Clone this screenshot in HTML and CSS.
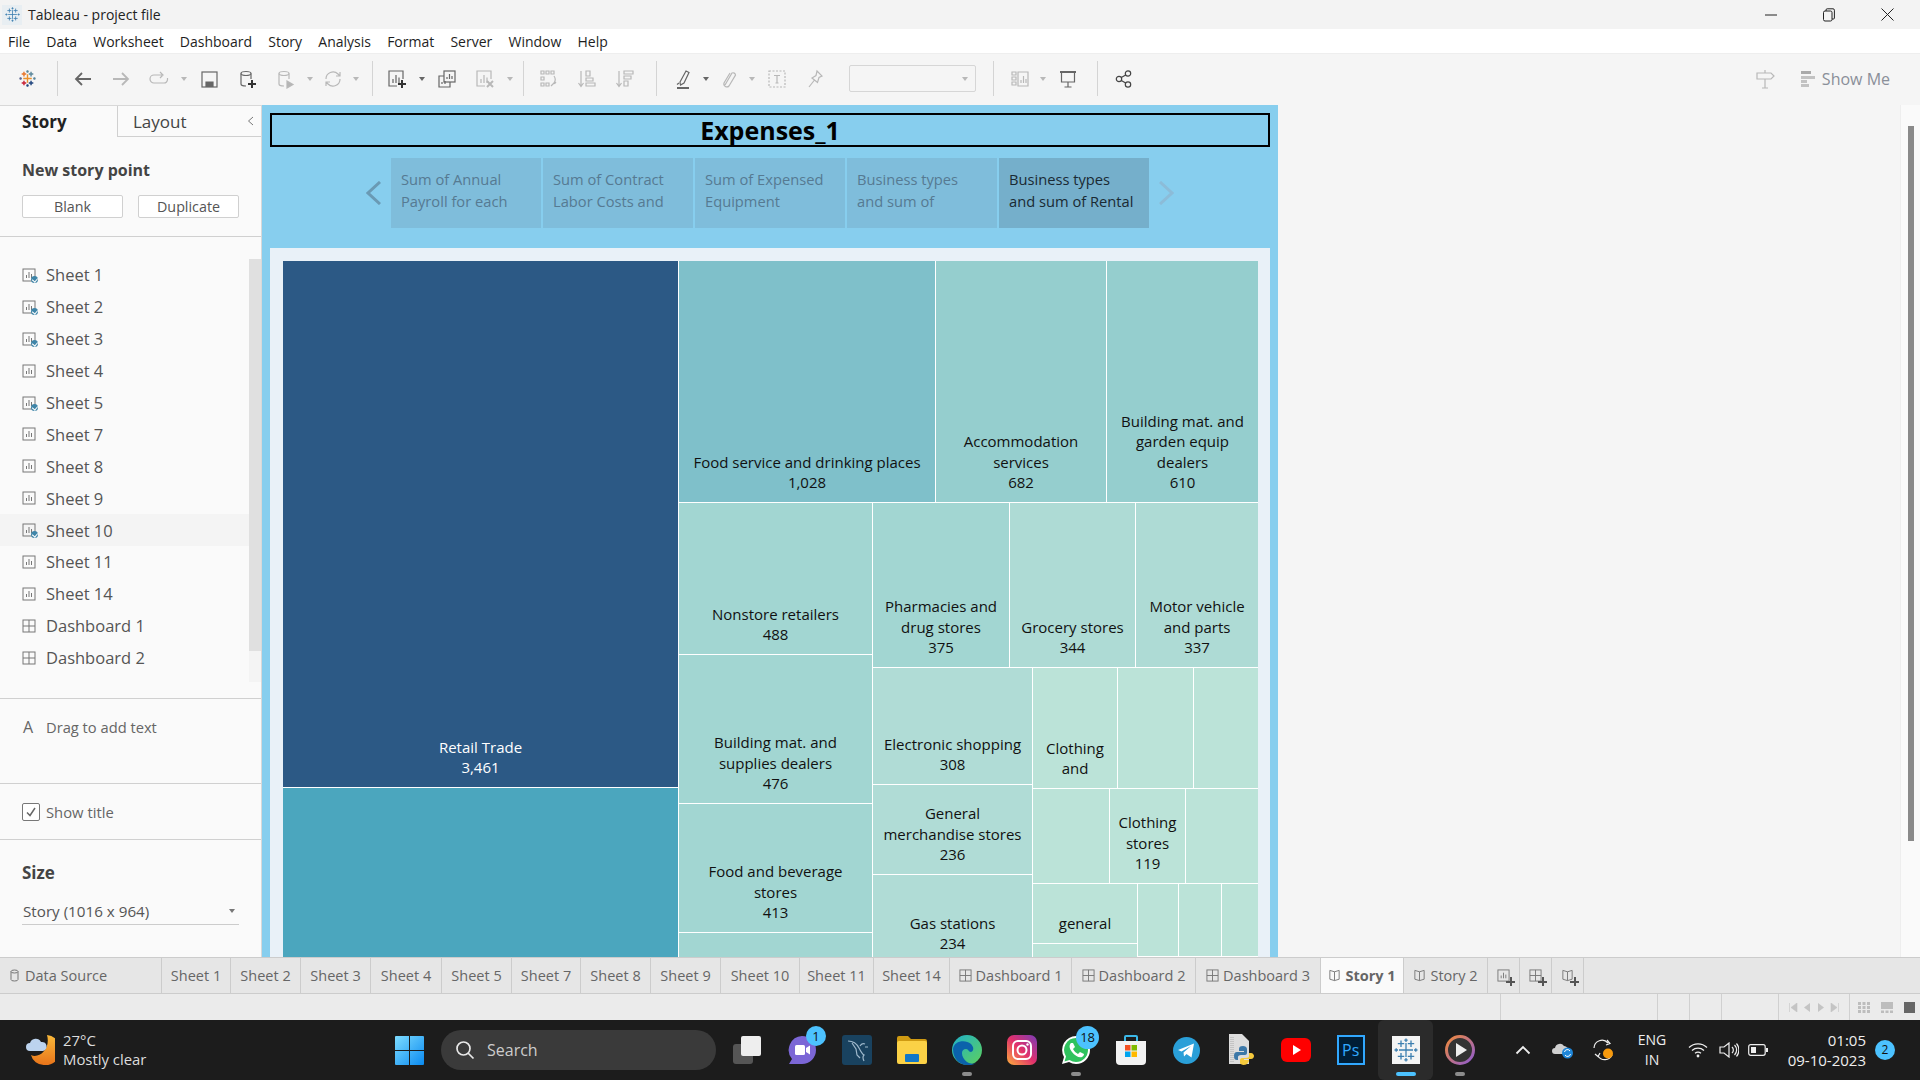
FILE: index.html
```html
<!DOCTYPE html>
<html lang="en">
<head>
    <meta charset="UTF-8">
    <title>Tableau - project file</title>
    <link rel="stylesheet" href="styles.css">
</head>
<body>
    <!-- shared icons -->
    <svg class="defs" aria-hidden="true">
        <symbol id="sheet" viewBox="0 0 14 14">
            <rect x="1" y="1" width="12" height="12" fill="none" stroke="#777" stroke-width="1"/>
            <path d="M4.5 10V7M7 10V4M9.5 10V6" fill="none" stroke="#777" stroke-width="1"/>
        </symbol>
        <symbol id="dash" viewBox="0 0 14 14">
            <rect x="1" y="1" width="12" height="12" fill="none" stroke="#777" stroke-width="1"/>
            <path d="M7 1V13M1 7H13" fill="none" stroke="#777" stroke-width="1"/>
        </symbol>
        <symbol id="book" viewBox="0 0 14 14">
            <path d="M7 3L2 1.5V11L7 12.5L12 11V1.5L7 3V12.5" fill="none" stroke="#777" stroke-width="1"/>
        </symbol>
        <symbol id="snow" viewBox="0 0 24 24">
            <path d="M12 5V19M5 12H19M7 2.5V9M3.8 5.7H10.2M17 2.5V9M13.8 5.7H20.2M7 15V21.5M3.8 18.3H10.2M17 15V21.5M13.8 18.3H20.2M12 .5V4M10.3 2.2H13.7M12 20V23.5M10.3 21.8H13.7M.5 12H4M2.2 10.3V13.7M20 12H23.5M21.8 10.3V13.7" fill="none" stroke="#3d7fb0" stroke-width="1.3"/>
        </symbol>
    </svg>

    <div class="app">
        <header class="titlebar">
            <div class="app-title">
                <span class="app-icon"><svg width="15" height="15"><use href="#snow"/></svg></span>
                <span>Tableau - project file</span>
            </div>
            <div class="win-controls">
                <svg width="12" height="12" viewBox="0 0 12 12"><path d="M0 6H12" stroke="#222" stroke-width="1"/></svg>
                <svg width="12" height="14" viewBox="0 0 12 14"><rect x=".5" y="3" width="8.5" height="10" rx="1.5" fill="none" stroke="#222"/><path d="M3 3V2a1.2 1.2 0 0 1 1.2-1.2H10a1.4 1.4 0 0 1 1.4 1.4V10a1 1 0 0 1-1 1H9" fill="none" stroke="#222"/></svg>
                <svg width="13" height="13" viewBox="0 0 13 13"><path d="M.5 .5L12.5 12.5M12.5 .5L.5 12.5" stroke="#222" stroke-width="1"/></svg>
            </div>
        </header>

        <nav class="menubar">
            <span>File</span><span>Data</span><span>Worksheet</span><span>Dashboard</span><span>Story</span><span>Analysis</span><span>Format</span><span>Server</span><span>Window</span><span>Help</span>
        </nav>

        <div class="toolbar">
            <div class="tool-group g-logo">
                <svg width="17" height="17" viewBox="0 0 24 24" fill="none" stroke-width="2">
                    <path d="M7 2.5V9M3.8 5.7H10.2" stroke="#e8762b"/><path d="M17 2.5V9M13.8 5.7H20.2" stroke="#5b879b"/>
                    <path d="M7 15V21.5M3.8 18.3H10.2" stroke="#c72035"/><path d="M17 15V21.5M13.8 18.3H20.2" stroke="#1f447e"/>
                    <path d="M12 6V18M6 12H18" stroke="#eb912b"/><path d="M12 .5V4M10.3 2.2H13.7" stroke="#59879b"/>
                    <path d="M.5 12H4M2.2 10.3V13.7" stroke="#5b6591"/><path d="M20 12H23.5M21.8 10.3V13.7" stroke="#5b879b"/>
                    <path d="M12 20V23.5M10.3 21.8H13.7" stroke="#1f447e"/>
                </svg>
            </div>
            <i class="sep"></i>
            <div class="tool-group g-nav">
                <span class="tool"><svg class="ico on" viewBox="0 0 20 20"><path d="M18 10H3M9 4L3 10L9 16" stroke-width="1.8"/></svg></span>
                <span class="tool"><svg class="ico off" viewBox="0 0 20 20"><path d="M2 10H17M11 4L17 10L11 16" stroke-width="1.8"/></svg></span>
                <span class="tool"><svg class="ico off" viewBox="0 0 20 20"><path d="M13 6H5a3.5 3.5 0 0 0 0 8h10a3.5 3.5 0 0 0 3.5-3.5V9M11 3l3 3-3 3"/></svg></span>
                <span class="caret off"></span>
                <span class="tool"><svg class="ico on" viewBox="0 0 20 20"><rect x="3" y="3" width="15" height="15"/><path d="M7 18V13H14V18" fill="#666"/></svg></span>
                <span class="tool"><svg class="ico on" viewBox="0 0 20 20"><ellipse cx="9" cy="4.5" rx="5" ry="2"/><path d="M4 4.5V15a5 2 0 0 0 5 2M14 4.5V10"/><path d="M15 11V19M11 15H19" stroke="#333" stroke-width="2"/></svg></span>
                <span class="tool"><svg class="ico off" viewBox="0 0 20 20"><ellipse cx="9" cy="4.5" rx="5" ry="2"/><path d="M4 4.5V15a5 2 0 0 0 5 2M14 4.5V10"/><path d="M12 12L18 15.5L12 19Z" fill="#b5b5b5"/></svg></span>
                <span class="caret off"></span>
                <span class="tool tool-n"><svg class="ico off" viewBox="0 0 20 20"><path d="M3 10a7 7 0 0 1 12-5l2 2M17 10a7 7 0 0 1-12 5l-2-2M17 3V7H13M3 17V13H7"/></svg></span>
                <span class="caret off"></span>
            </div>
            <i class="sep"></i>
            <div class="tool-group g-sheet">
                <span class="tool"><svg class="ico on" viewBox="0 0 20 20"><path d="M10 17H2V2H16V10"/><path d="M6 14V10M9 14V6M12 14V8.5"/><path d="M15 11V19M11 15H19" stroke="#333" stroke-width="2"/></svg></span>
                <span class="caret on"></span>
                <span class="tool"><svg class="ico on" viewBox="0 0 20 20"><rect x="7" y="2" width="11" height="11" fill="#f5f5f5"/><path d="M10 10V8M12.5 10V5M15 10V7"/><path d="M7 7H2V18H13V13"/><path d="M5 15V13M8 15V12"/></svg></span>
                <span class="tool"><svg class="ico off" viewBox="0 0 20 20"><path d="M10 17H2V2H16V10"/><path d="M6 14V10M9 14V6M12 14V8.5"/><path d="M12 12L18 18M18 12L12 18" stroke-width="2"/></svg></span>
                <span class="caret off"></span>
            </div>
            <i class="sep"></i>
            <div class="tool-group g-sort">
                <span class="tool"><svg class="ico off" viewBox="0 0 20 20"><path d="M2 2h3v3H2zM7 2h3v3H7zM12 2h3v3h-3zM2 8h3v3H2zM2 14h3v3H2zM7 14h3v3H7z"/><path d="M15 7a6 6 0 0 1 0 7l-3 3M17 13l-1.500 2"/></svg></span>
                <span class="tool"><svg class="ico off" viewBox="0 0 20 20"><path d="M4 2V17M1.500 14L4 17.500L6.500 14"/><path d="M9 2h4v5H9zM9 9h7v3H9zM9 14h9v3H9z"/></svg></span>
                <span class="tool"><svg class="ico off" viewBox="0 0 20 20"><path d="M4 2V17M1.500 14L4 17.500L6.500 14"/><path d="M9 2h9v3H9zM9 7h7v3H9zM9 12h4v5H9z"/></svg></span>
            </div>
            <i class="sep"></i>
            <div class="tool-group g-annot">
                <span class="tool tool-n"><svg class="ico on" viewBox="0 0 20 20"><path d="M7 13L13 2L16 3.500L11 14L7.500 16ZM4 15.500L6 14"/><path d="M4 19H16" stroke-width="2"/></svg></span>
                <span class="caret on"></span>
                <span class="tool tool-n"><svg class="ico off" viewBox="0 0 20 20"><path d="M6 16L13 4a2.500 2.500 0 0 1 3.500 2L10 17a3 3 0 0 1-5-3L11 4"/></svg></span>
                <span class="caret off"></span>
                <span class="tool"><svg class="ico off" viewBox="0 0 20 20"><rect x="2" y="2" width="16" height="16" stroke-dasharray="2 1.500"/><path d="M7 6.500H13M10 6.500V14M8.500 14H11.500"/></svg></span>
                <span class="tool"><svg class="ico off" viewBox="0 0 20 20"><path d="M12 2L17 7L14 8.500L12.500 13.500L7 9L11 6.500ZM9.500 11L4 18"/></svg></span>
                <div class="fit-select"><span class="caret off"></span></div>
            </div>
            <i class="sep"></i>
            <div class="tool-group g-view">
                <span class="tool tool-n"><svg class="ico off" viewBox="0 0 20 20"><path d="M2 3h4v3H2zM2 8h4v3H2zM2 13h4v3H2zM8 3H18V17H8zM11 14V11M13.500 14V7M16 14V10"/></svg></span>
                <span class="caret off"></span>
                <span class="tool"><svg class="ico on" viewBox="0 0 20 20"><path d="M2 3H18" stroke-width="2"/><path d="M3.500 3V13H16.500V3M10 13V18M6.500 18H13.500"/></svg></span>
            </div>
            <i class="sep"></i>
            <div class="tool-group g-share">
                <span class="tool"><svg class="ico dark" viewBox="0 0 20 20"><circle cx="5" cy="10" r="2.700"/><circle cx="14" cy="4.500" r="2.700"/><circle cx="14" cy="15.500" r="2.700"/><path d="M7.300 8.600L11.700 6M7.300 11.400L11.700 14"/></svg></span>
            </div>
            <div class="toolbar-right">
                <svg class="ico off sign" viewBox="0 0 20 20"><path d="M2 4H16L19 7L16 10H2ZM10 1V4M10 10V19M7 19H13"/></svg>
                <div class="show-me">
                    <svg width="14" height="18" viewBox="0 0 14 18"><path d="M0 1h10v3H0z" fill="#aaa"/><path d="M0 6h14v3H0z" fill="#c2c2c2"/><path d="M0 10h6v3H0z" fill="#c2c2c2"/><path d="M0 14h8v3H0z" fill="#c2c2c2"/></svg>
                    <span>Show Me</span>
                </div>
            </div>
        </div>

        <div class="workspace">
            <aside class="side">
                <div class="side-tabs">
                    <div class="side-tab active">Story</div>
                    <div class="side-tab">Layout<svg class="collapse" width="7" height="10" viewBox="0 0 7 10"><path d="M6 1L1.500 5L6 9" fill="none" stroke="#777"/></svg></div>
                </div>
                <section class="new-point">
                    <h3>New story point</h3>
                    <div class="point-btns">
                        <button type="button">Blank</button>
                        <button type="button">Duplicate</button>
                    </div>
                </section>
                <section class="sheet-section">
                    <ul class="sheet-list">
                        <li><span class="sheet-ico"><svg width="14" height="14"><use href="#sheet"/></svg><b class="done"></b></span>Sheet 1</li>
                        <li><span class="sheet-ico"><svg width="14" height="14"><use href="#sheet"/></svg><b class="done"></b></span>Sheet 2</li>
                        <li><span class="sheet-ico"><svg width="14" height="14"><use href="#sheet"/></svg><b class="done"></b></span>Sheet 3</li>
                        <li><span class="sheet-ico"><svg width="14" height="14"><use href="#sheet"/></svg></span>Sheet 4</li>
                        <li><span class="sheet-ico"><svg width="14" height="14"><use href="#sheet"/></svg><b class="done"></b></span>Sheet 5</li>
                        <li><span class="sheet-ico"><svg width="14" height="14"><use href="#sheet"/></svg></span>Sheet 7</li>
                        <li><span class="sheet-ico"><svg width="14" height="14"><use href="#sheet"/></svg></span>Sheet 8</li>
                        <li><span class="sheet-ico"><svg width="14" height="14"><use href="#sheet"/></svg></span>Sheet 9</li>
                        <li class="hover"><span class="sheet-ico"><svg width="14" height="14"><use href="#sheet"/></svg><b class="done"></b></span>Sheet 10</li>
                        <li><span class="sheet-ico"><svg width="14" height="14"><use href="#sheet"/></svg></span>Sheet 11</li>
                        <li><span class="sheet-ico"><svg width="14" height="14"><use href="#sheet"/></svg></span>Sheet 14</li>
                        <li><span class="sheet-ico"><svg width="14" height="14"><use href="#dash"/></svg></span>Dashboard 1</li>
                        <li><span class="sheet-ico"><svg width="14" height="14"><use href="#dash"/></svg></span>Dashboard 2</li>
                    </ul>
                    <div class="side-scroll"><div class="side-thumb"></div></div>
                </section>
                <section class="drag-text"><span class="big-a">A</span>Drag to add text</section>
                <section class="show-title">
                    <span class="checkbox"><svg width="12" height="12" viewBox="0 0 12 12"><path d="M2 6.500L5 9.500L10 2" fill="none" stroke="#666" stroke-width="1.500"/></svg></span>
                    Show title
                </section>
                <section class="size-section">
                    <h3>Size</h3>
                    <div class="size-select">Story (1016 x 964)<span class="caret on"></span></div>
                </section>
            </aside>

            <main class="story">
                <div class="story-title">Expenses_1</div>
                <div class="points">
                    <svg class="chev" width="15" height="24" viewBox="0 0 15 24"><path d="M14 1L2 12L14 23" fill="none" stroke="#6a9ab4" stroke-width="3"/></svg>
                    <div class="point">Sum of Annual<br>Payroll for each</div>
                    <div class="point">Sum of Contract<br>Labor Costs and</div>
                    <div class="point">Sum of Expensed<br>Equipment</div>
                    <div class="point">Business types<br>and sum of</div>
                    <div class="point current">Business types<br>and sum of Rental</div>
                    <svg class="chev next" width="15" height="24" viewBox="0 0 15 24"><path d="M1 1L13 12L1 23" fill="none" stroke="#8cbcd8" stroke-width="3"/></svg>
                </div>
                <div class="frame">
                    <div class="treemap">
                        <div class="tm-col c-retail">
                            <div class="tile retail">Retail Trade<br>3,461</div>
                            <div class="tile other"></div>
                        </div>
                        <div class="tm-col c-rest">
                            <div class="tm-row r-top">
                                <div class="tile food">Food service and drinking places<br>1,028</div>
                                <div class="tile accom">Accommodation<br>services<br>682</div>
                                <div class="tile build">Building mat. and<br>garden equip<br>dealers<br>610</div>
                            </div>
                            <div class="tm-row r-low">
                                <div class="tm-col c-left">
                                    <div class="tile nonstore">Nonstore retailers<br>488</div>
                                    <div class="tile supplies">Building mat. and<br>supplies dealers<br>476</div>
                                    <div class="tile bev">Food and beverage<br>stores<br>413</div>
                                    <div class="tile bev-next"></div>
                                </div>
                                <div class="tm-col c-mid">
                                    <div class="tm-row r-mid">
                                        <div class="tile pharm">Pharmacies and<br>drug stores<br>375</div>
                                        <div class="tile grocery">Grocery stores<br>344</div>
                                        <div class="tile motor">Motor vehicle<br>and parts<br>337</div>
                                    </div>
                                    <div class="tm-row r-rest">
                                        <div class="tm-col c-elec">
                                            <div class="tile elec">Electronic shopping<br>308</div>
                                            <div class="tile general">General<br>merchandise stores<br>236</div>
                                            <div class="tile gas">Gas stations<br>234</div>
                                        </div>
                                        <div class="tm-col c-small">
                                            <div class="tm-row s1">
                                                <div class="tile s1a">Clothing<br>and</div>
                                                <div class="tile s1b"></div>
                                                <div class="tile s1c"></div>
                                            </div>
                                            <div class="tm-row s2">
                                                <div class="tile s2a"></div>
                                                <div class="tile s2b">Clothing<br>stores<br>119</div>
                                                <div class="tile s2c"></div>
                                            </div>
                                            <div class="tm-row s3">
                                                <div class="tm-col s3a">
                                                    <div class="tile s3a1">general</div>
                                                    <div class="tile s3a2"></div>
                                                </div>
                                                <div class="tile s3b"></div>
                                                <div class="tile s3c"></div>
                                                <div class="tile s3d"></div>
                                            </div>
                                        </div>
                                    </div>
                                </div>
                            </div>
                        </div>
                    </div>
                </div>
            </main>

            <div class="canvas-rest"></div>
            <div class="main-scroll"><div class="main-thumb"></div></div>
        </div>

        <div class="tabs">
            <div class="tab t162 t-source"><svg width="9" height="13" viewBox="0 0 9 13"><ellipse cx="4.500" cy="2.500" rx="3.500" ry="1.500" fill="none" stroke="#777"/><path d="M1 2.500V10.500a3.500 1.500 0 0 0 7 0V2.500" fill="none" stroke="#777"/></svg>Data Source</div>
            <div class="tab t69">Sheet 1</div>
            <div class="tab t70">Sheet 2</div>
            <div class="tab t70">Sheet 3</div>
            <div class="tab t71">Sheet 4</div>
            <div class="tab t70">Sheet 5</div>
            <div class="tab t69">Sheet 7</div>
            <div class="tab t70">Sheet 8</div>
            <div class="tab t70">Sheet 9</div>
            <div class="tab t79">Sheet 10</div>
            <div class="tab t74">Sheet 11</div>
            <div class="tab t76">Sheet 14</div>
            <div class="tab t122"><svg width="13" height="13"><use href="#dash"/></svg>Dashboard 1</div>
            <div class="tab t124"><svg width="13" height="13"><use href="#dash"/></svg>Dashboard 2</div>
            <div class="tab t125"><svg width="13" height="13"><use href="#dash"/></svg>Dashboard 3</div>
            <div class="tab t83 active"><svg width="13" height="13"><use href="#book"/></svg>Story 1</div>
            <div class="tab t84"><svg width="13" height="13"><use href="#book"/></svg>Story 2</div>
            <div class="tab t32"><span class="add-ico"><svg width="13" height="13"><use href="#sheet"/></svg><i></i></span></div>
            <div class="tab t32"><span class="add-ico"><svg width="13" height="13"><use href="#dash"/></svg><i></i></span></div>
            <div class="tab t32"><span class="add-ico"><svg width="13" height="13"><use href="#book"/></svg><i></i></span></div>
        </div>

        <div class="statusbar">
            <div class="st st-main"></div>
            <div class="st st-a"></div>
            <div class="st st-b"></div>
            <div class="st st-b"></div>
            <div class="st st-c"></div>
            <div class="st st-nav">
                <svg width="9" height="9" viewBox="0 0 9 9"><path d="M.5 0V9M8 0V9L2 4.500Z" fill="#c4c4c4" stroke="#c4c4c4" stroke-width=".6"/></svg>
                <svg width="7" height="9" viewBox="0 0 7 9"><path d="M6 0V9L0 4.500Z" fill="#c4c4c4"/></svg>
                <svg width="7" height="9" viewBox="0 0 7 9"><path d="M1 0V9L7 4.500Z" fill="#c4c4c4"/></svg>
                <svg width="9" height="9" viewBox="0 0 9 9"><path d="M8.500 0V9M1 0V9L7 4.500Z" fill="#c4c4c4" stroke="#c4c4c4" stroke-width=".6"/></svg>
            </div>
            <div class="st st-views">
                <svg width="12" height="11" viewBox="0 0 12 11" fill="#bdbdbd"><path d="M0 0h3v3H0zM4.500 0h3v3h-3zM9 0h3v3H9zM0 4h3v3H0zM4.500 4h3v3h-3zM9 4h3v3H9zM0 8h3v3H0zM4.500 8h3v3h-3zM9 8h3v3H9z"/></svg>
                <svg width="12" height="11" viewBox="0 0 12 11" fill="#bdbdbd"><path d="M0 0h12v7H0zM0 8.500h3V11H0zM4.500 8.500h3V11h-3zM9 8.500h3V11H9z"/></svg>
                <svg width="11" height="11" viewBox="0 0 11 11" fill="#666"><path d="M0 0h11v11H0z"/></svg>
            </div>
        </div>

        <footer class="taskbar">
            <div class="weather">
                <svg width="30" height="34" viewBox="0 0 30 34">
                    <defs><linearGradient id="moon" x1="0" y1="0" x2="0" y2="1"><stop offset="0" stop-color="#f9b93a"/><stop offset="1" stop-color="#e8741a"/></linearGradient></defs>
                    <path d="M22 2a14 14 0 0 1-3 30 13 13 0 0 1-13-10c8 4 20-6 16-20Z" fill="url(#moon)"/>
                    <path d="M5 18a4 4 0 0 1 0-8 6 6 0 0 1 11-1 4.500 4.500 0 0 1 2 9Z" fill="#bcd3ee"/>
                </svg>
                <div class="weather-text"><span>27°C</span><span>Mostly clear</span></div>
            </div>
            <svg class="start" width="29" height="29" viewBox="0 0 29 29">
                <defs><linearGradient id="win" x1="0" y1="0" x2="1" y2="1"><stop offset="0" stop-color="#7ddcff"/><stop offset="1" stop-color="#0a8af0"/></linearGradient></defs>
                <path d="M0 1a1 1 0 0 1 1-1H14V14H0ZM15 0H28a1 1 0 0 1 1 1V14H15ZM0 15H14V29H1a1 1 0 0 1-1-1ZM15 15H29V28a1 1 0 0 1-1 1H15Z" fill="url(#win)"/>
            </svg>
            <div class="search">
                <svg width="20" height="20" viewBox="0 0 20 20"><circle cx="8.500" cy="8.500" r="6.500" fill="none" stroke="#e8e8e8" stroke-width="1.700"/><path d="M13 13L18.500 18.500" stroke="#e8e8e8" stroke-width="1.700"/></svg>
                <span>Search</span>
            </div>
            <div class="task-items">
                <div class="task-item">
                    <svg width="30" height="30" viewBox="0 0 30 30"><rect x="1" y="9" width="20" height="20" rx="3" fill="#555"/><rect x="9" y="1" width="20" height="20" rx="2" fill="#eee"/></svg>
                </div>
                <div class="task-item">
                    <svg width="30" height="32" viewBox="0 0 30 32"><path d="M15 2a14 14 0 0 1 14 14 14 14 0 0 1-14 14H2l3-5A14 14 0 0 1 15 2Z" fill="#7b66d6"/><rect x="8" y="11" width="10" height="10" rx="1.500" fill="#fff"/><path d="M19 14L23 11.500V20.500L19 18Z" fill="#fff"/></svg>
                    <span class="badge">1</span>
                </div>
                <div class="task-item">
                    <svg width="30" height="30" viewBox="0 0 30 30"><rect width="30" height="30" rx="3" fill="#19425f"/><path d="M6 6c6 0 9 3 11 7s3 6 5 7c-2 2-1 4 0 6M10 8l4 6 1 6 3 3M18 11c1-2 3-3 5-2M23 12h3" fill="none" stroke="#9fb9cc" stroke-width="1.200"/></svg>
                </div>
                <div class="task-item">
                    <svg width="30" height="28" viewBox="0 0 30 28"><path d="M0 2a2 2 0 0 1 2-2H11l3 3H28a2 2 0 0 1 2 2V8H0Z" fill="#cf9a12"/><rect y="5" width="30" height="23" rx="2" fill="#fbd146"/><rect x="8" y="18" width="14" height="8" rx="1" fill="#1177c9"/></svg>
                </div>
                <div class="task-item running">
                    <svg width="30" height="30" viewBox="0 0 30 30">
                        <defs><linearGradient id="edge" x1="0" y1="0" x2="1" y2="1"><stop offset="0" stop-color="#1fb0c9"/><stop offset="1" stop-color="#5ed15c"/></linearGradient></defs>
                        <circle cx="15" cy="15" r="15" fill="url(#edge)"/>
                        <path d="M1 14C2 6 13 4 19 9c3 3 3 7 0 8-3 0-2-3-5-3-6 0-5 9 1 13 3 2 7 2 9 1-7 5-23 2-23-14Z" fill="#0b62ab"/>
                    </svg>
                </div>
                <div class="task-item">
                    <svg width="30" height="30" viewBox="0 0 30 30">
                        <defs><linearGradient id="insta" x1="0" y1="1" x2="1" y2="0"><stop offset="0" stop-color="#fdb03c"/><stop offset=".5" stop-color="#e1306c"/><stop offset="1" stop-color="#7a3db8"/></linearGradient></defs>
                        <rect width="30" height="30" rx="7" fill="url(#insta)"/>
                        <rect x="6" y="6" width="18" height="18" rx="5" fill="none" stroke="#fff" stroke-width="2"/>
                        <circle cx="15" cy="15" r="4.500" fill="none" stroke="#fff" stroke-width="2"/>
                        <circle cx="20.500" cy="9.500" r="1.200" fill="#fff"/>
                    </svg>
                </div>
                <div class="task-item running">
                    <svg width="30" height="30" viewBox="0 0 30 30"><path d="M15 1a14 14 0 0 1 0 28 14 14 0 0 1-7-2L1 29l2-7A14 14 0 0 1 15 1Z" fill="#fff"/><path d="M15 3a12 12 0 0 1 0 24 12 12 0 0 1-6.500-2L3.500 26.500 5 21.500A12 12 0 0 1 15 3Z" fill="#2fc25d"/><path d="M10 8c-2 2-2 5 1 9s7 6 10 5c2-1 2-3 2-3l-4-2-2 2c-2-1-4-3-5-5l2-2-2-4Z" fill="#fff"/></svg>
                    <span class="badge wide">18</span>
                </div>
                <div class="task-item">
                    <svg width="30" height="30" viewBox="0 0 30 30"><path d="M9 7V2a1 1 0 0 1 1-1H20a1 1 0 0 1 1 1V7" fill="none" stroke="#3bb8e8" stroke-width="2"/><path d="M0 6H30V26a4 4 0 0 1-4 4H4a4 4 0 0 1-4-4Z" fill="#f2f2f2"/><rect x="9" y="10" width="5.500" height="5.500" fill="#f25022"/><rect x="15.500" y="10" width="5.500" height="5.500" fill="#7fba00"/><rect x="9" y="16.500" width="5.500" height="5.500" fill="#00a4ef"/><rect x="15.500" y="16.500" width="5.500" height="5.500" fill="#ffb900"/></svg>
                </div>
                <div class="task-item">
                    <svg width="27" height="27" viewBox="0 0 27 27"><circle cx="13.500" cy="13.500" r="13.500" fill="#2a9fd8"/><path d="M5 13L21 6.500L18.500 20.500L13.500 17L11 19.500L10.500 15.500L18 9L8.500 14.500Z" fill="#fff"/></svg>
                </div>
                <div class="task-item">
                    <svg width="26" height="32" viewBox="0 0 26 32"><path d="M1 0H14L21 7V30H1Z" fill="#ddd"/><path d="M3 3V28M5 3V28" stroke="#aaa" stroke-dasharray="1 1"/><path d="M15 12c-3 0-4 1-4 3v2h5v1H9c-2 0-3 1-3 4s1 4 3 4h1v-3c0-1 1-2 3-2h4c1 0 2-1 2-2v-4c0-2-2-3-4-3Z" fill="#3c78a8"/><path d="M21 19v3c0 1-1 2-3 2h-4c-1 0-2 1-2 2v3c0 2 6 3 8 0 1-1 1-3 1-3h-5v-1h7c2 0 3-2 3-3s-1-3-3-3Z" fill="#f5c93c"/></svg>
                </div>
                <div class="task-item">
                    <svg width="30" height="24" viewBox="0 0 30 24"><rect width="30" height="24" rx="6" fill="#f00"/><path d="M12 7L20 12L12 17Z" fill="#fff"/></svg>
                </div>
                <div class="task-item"><span class="ps">Ps</span></div>
                <div class="task-item current">
                    <span class="tableau-tile"><svg width="24" height="24"><use href="#snow"/></svg></span>
                </div>
                <div class="task-item running">
                    <svg width="30" height="30" viewBox="0 0 30 30">
                        <defs><linearGradient id="ring" x1="0" y1="0" x2="1" y2="1"><stop offset="0" stop-color="#f18a3b"/><stop offset="1" stop-color="#8d5bd1"/></linearGradient></defs>
                        <circle cx="15" cy="15" r="13.500" fill="#333" stroke="url(#ring)" stroke-width="3"/>
                        <path d="M11 8L22 15L11 22Z" fill="#eee"/>
                    </svg>
                </div>
            </div>
            <div class="tray">
                <span class="tray-item w40"><svg width="16" height="10" viewBox="0 0 16 10"><path d="M1.500 8.500L8 2L14.500 8.500" fill="none" stroke="#eee" stroke-width="1.800"/></svg></span>
                <span class="tray-item w39"><svg width="22" height="18" viewBox="0 0 22 18"><path d="M3 13a3 3 0 0 1 0-6 5 5 0 0 1 9-2 4 4 0 0 1 4 5v3Z" fill="#cfcfcf"/><circle cx="15.500" cy="12" r="5.500" fill="#1f86d8"/><path d="M12.500 11a3 3 0 0 1 5.500-1M18.500 13a3 3 0 0 1-5.500 1" fill="none" stroke="#fff"/></svg></span>
                <span class="tray-item w42"><svg width="22" height="22" viewBox="0 0 22 22"><path d="M2 9a8 8 0 0 1 14-5M15 1L18 4.500L14 6M20 16a8 8 0 0 1-14 1M3 15l3 2.500L8 14" fill="none" stroke="#eee" stroke-width="1.200"/><circle cx="16" cy="14.500" r="5" fill="#f79a0e"/></svg></span>
                <span class="tray-item w56 lang">ENG<br>IN</span>
                <span class="tray-item w36"><svg width="20" height="16" viewBox="0 0 20 16"><path d="M1 5.500a13 13 0 0 1 18 0M4 8.500a9 9 0 0 1 12 0M7 11.200a5 5 0 0 1 6 0" fill="none" stroke="#eee" stroke-width="1.300"/><circle cx="10" cy="14" r="1.400" fill="#eee"/></svg></span>
                <span class="tray-item w25"><svg width="20" height="16" viewBox="0 0 20 16"><path d="M1 5H5L10 1V15L5 11H1Z" fill="none" stroke="#eee" stroke-width="1.200"/><path d="M13 5a4 4 0 0 1 0 6M15.500 3a7 7 0 0 1 0 10M17.500 1.500a10 10 0 0 1 0 13" fill="none" stroke="#eee" stroke-width="1.200"/></svg></span>
                <span class="tray-item w34"><svg width="20" height="12" viewBox="0 0 20 12"><rect x=".7" y=".7" width="16.500" height="10.600" rx="2" fill="none" stroke="#eee" stroke-width="1.200"/><rect x="3" y="3" width="5" height="6" fill="#eee"/><rect x="18" y="4" width="2" height="4" fill="#eee"/></svg></span>
                <span class="clock">01:05<br>09-10-2023</span>
                <span class="notif">2</span>
            </div>
        </footer>
    </div>
</body>
</html>
```

FILE: styles.css
```css
* {
    box-sizing: border-box;
}

html, body {
    margin: 0;
    height: 100%;
    overflow: hidden;
}

body {
    font-family: "Open Sans", Arial, sans-serif;
    font-size: 14px;
    color: #333;
    background: #f5f5f5;
}

.defs {
    position: absolute;
    width: 0;
    height: 0;
}

.app {
    display: flex;
    flex-direction: column;
    width: 1920px;
    height: 1080px;
}

/* window chrome */
.titlebar {
    flex: 0 0 29px;
    display: flex;
    justify-content: space-between;
    align-items: center;
    background: #f3f3f3;
}

.app-title {
    display: flex;
    align-items: center;
    font-size: 14px;
    color: #222;
}

.app-icon {
    display: flex;
    align-items: center;
    justify-content: center;
    width: 20px;
    height: 20px;
    margin: 0 6px 0 2px;
    background: #e8eef2;
}

.win-controls {
    display: flex;
    align-items: center;
    width: 155px;
    justify-content: space-between;
    padding-right: 26px;
}

.menubar {
    flex: 0 0 25px;
    display: flex;
    align-items: center;
    gap: 16.2px;
    padding-left: 8px;
    background: #fff;
    font-size: 14px;
    color: #1e1e1e;
    border-bottom: 1px solid #eee;
}

/* toolbar */
.toolbar {
    flex: 0 0 51px;
    display: flex;
    align-items: center;
    padding-bottom: 2px;
    background: #f5f5f5;
}

.tool-group {
    display: flex;
    align-items: center;
    height: 35px;
}

.sep {
    flex: 0 0 1px;
    height: 35px;
    background: #d4d4d4;
}

.g-logo {
    width: 57px;
    justify-content: center;
    padding-right: 3px;
}

.g-nav {
    width: 314px;
    padding-left: 6px;
}

.g-sheet {
    width: 150px;
    padding-left: 5px;
}

.g-sort {
    width: 132px;
    padding-left: 6px;
}

.g-annot {
    width: 336px;
    padding-left: 9px;
}

.g-view {
    width: 103px;
    padding-left: 9px;
}

.g-share {
    padding-left: 7px;
}

.tool {
    display: flex;
    flex: 0 0 38px;
    justify-content: center;
}

.tool-n {
    flex-basis: 34px;
}

.ico {
    width: 20px;
    height: 20px;
    fill: none;
    stroke: currentColor;
    stroke-width: 1.2;
}

.on {
    color: #666;
}

.off {
    color: #b8b8b8;
}

.dark {
    color: #444;
}

.caret {
    flex: 0 0 12px;
    width: 12px;
    height: 4px;
    position: relative;
}

.caret::after {
    content: "";
    position: absolute;
    left: 3px;
    top: 0;
    border-left: 3px solid transparent;
    border-right: 3px solid transparent;
    border-top: 4px solid currentColor;
}

.fit-select {
    display: flex;
    justify-content: flex-end;
    align-items: center;
    width: 127px;
    height: 27px;
    margin-left: 15px;
    padding-right: 4px;
    border: 1px solid #d6d6d6;
    border-radius: 2px;
}

.toolbar-right {
    display: flex;
    align-items: center;
    margin-left: auto;
    padding-right: 30px;
}

.sign {
    margin-right: 26px;
}

.show-me {
    display: flex;
    align-items: center;
    gap: 7px;
    font-size: 16px;
    color: #8a8f99;
}

/* main row */
.workspace {
    flex: 0 0 852px;
    display: flex;
    min-height: 0;
}

.side {
    flex: 0 0 262px;
    display: flex;
    flex-direction: column;
    background: #fafafa;
    border-top: 1px solid #d8d8d8;
    border-right: 1px solid #d8d8d8;
}

.side section {
    border-bottom: 1px solid #d0d0d0;
}

.side-tabs {
    flex: 0 0 31px;
    display: flex;
}

.side-tab {
    display: flex;
    align-items: center;
    font-size: 17px;
    color: #444;
    border-bottom: 1px solid #d0d0d0;
}

.side-tab.active {
    width: 118px;
    padding-left: 22px;
    font-weight: 700;
    color: #222;
    border-bottom: 0;
    border-right: 1px solid #d0d0d0;
}

.side-tab:last-child {
    flex: 1;
    padding-left: 15px;
    position: relative;
}

.collapse {
    position: absolute;
    right: 7px;
    top: 10px;
}

.new-point {
    flex: 0 0 100px;
    padding: 23px 22px 0;
}

h3 {
    margin: 0;
    font-size: 16px;
    line-height: 20px;
    font-weight: 700;
    color: #444;
}

.point-btns {
    display: flex;
    justify-content: space-between;
    margin-top: 15px;
}

.point-btns button {
    width: 101px;
    height: 23px;
    padding: 0;
    font-family: inherit;
    font-size: 14.3px;
    color: #555;
    background: #fff;
    border: 1px solid #d0d0d0;
    border-radius: 2px;
}

.sheet-section {
    flex: 0 0 462px;
    display: flex;
    padding-top: 22px;
}

.sheet-list {
    flex: 1;
    margin: 0;
    padding: 0;
    list-style: none;
    font-size: 16.5px;
    color: #555;
}

.sheet-list li {
    display: flex;
    align-items: center;
    height: 31.9px;
    padding-left: 22px;
}

.sheet-list li.hover {
    background: #f4f4f4;
}

.sheet-ico {
    position: relative;
    display: flex;
    flex: 0 0 24px;
}

.done {
    position: absolute;
    left: 9px;
    top: 8px;
    width: 7px;
    height: 7px;
    border-radius: 50%;
    background: #3f85a8;
}

.done::after {
    content: "";
    position: absolute;
    left: 2px;
    top: 1px;
    width: 3px;
    height: 4px;
    border-right: 1px solid #fff;
    border-bottom: 1px solid #fff;
    transform: rotate(40deg);
}

.side-scroll {
    flex: 0 0 12px;
    height: 423px;
    background: #f4f4f4;
}

.side-thumb {
    height: 392px;
    background: #e0e0e0;
}

.drag-text {
    flex: 0 0 85px;
    display: flex;
    align-items: flex-start;
    padding: 18px 0 0 23px;
    font-size: 14.7px;
    line-height: 20px;
    color: #666;
}

.big-a {
    flex: 0 0 23px;
    font-size: 16px;
}

.show-title {
    flex: 0 0 56px;
    display: flex;
    align-items: center;
    gap: 6px;
    padding-left: 22px;
    font-size: 14.8px;
    color: #666;
}

.checkbox {
    display: flex;
    align-items: center;
    justify-content: center;
    width: 18px;
    height: 18px;
    border: 1px solid #777;
    border-radius: 2px;
    background: #fff;
}

.side .size-section {
    flex: 1;
    padding: 23px 22px 0;
    border-bottom: 0;
}

.size-section h3 {
    font-size: 17px;
}

.size-select {
    display: flex;
    justify-content: space-between;
    align-items: center;
    height: 28px;
    margin-top: 14px;
    padding: 0 1px;
    font-size: 15.2px;
    color: #555;
    border-bottom: 1px solid #ccc;
}

.size-select .caret {
    flex-basis: 12px;
    color: #777;
}

/* story */
.story {
    flex: 0 0 1016px;
    display: flex;
    flex-direction: column;
    padding: 8px 8px 0;
    background: #87ceee;
    min-height: 0;
}

.story-title {
    flex: 0 0 34px;
    display: flex;
    align-items: center;
    justify-content: center;
    font-size: 25px;
    line-height: 1;
    font-weight: 700;
    color: #000;
    border: 2px solid #000;
}

.points {
    flex: 0 0 70px;
    display: flex;
    gap: 2px;
    align-items: stretch;
    margin-top: 11px;
    padding-left: 96px;
}

.chev {
    align-self: center;
    margin-right: 8px;
}

.chev.next {
    margin: 0 0 0 8px;
}

.point {
    flex: 0 0 150px;
    padding: 10px 0 0 10px;
    font-size: 14.7px;
    line-height: 22px;
    color: #567a92;
    background: #7fbddb;
}

.point.current {
    color: #1a2a33;
    background: #75afcb;
}

.frame {
    flex: 1;
    margin-top: 20px;
    padding: 13px 12px 0 13px;
    background: #e9f1f8;
    min-height: 0;
    overflow: hidden;
}

/* treemap */
.treemap {
    display: flex;
    gap: 1px;
    width: 975px;
    height: 696px;
    background: #fff;
    overflow: hidden;
}

.tm-col {
    display: flex;
    flex: none;
    flex-direction: column;
    gap: 1px;
}

.tm-row {
    display: flex;
    flex: none;
    gap: 1px;
}

.tile {
    display: flex;
    flex: none;
    flex-direction: column;
    justify-content: flex-end;
    padding: 0 2px 9px;
    font-size: 15px;
    line-height: 20.6px;
    text-align: center;
    color: #111;
}

.c-retail { width: 395px; }
.retail { height: 526px; background: #2c5985; color: #fff; }
.other { height: 170px; background: #4ba6be; }

.c-rest { width: 579px; }
.r-top { height: 241px; }
.food { width: 256px; background: #7fc0ca; }
.accom { width: 170px; background: #95cece; }
.build { width: 151px; background: #95cece; }

.c-left { width: 193px; }
.nonstore { height: 151px; background: #a2d6d2; }
.supplies { height: 148px; background: #a2d6d2; }
.bev { height: 128px; background: #a2d6d2; }
.bev-next { height: 30px; background: #a2d6d2; }

.c-mid { width: 385px; }
.r-mid { height: 164px; }
.pharm { width: 136px; background: #a2d6d2; }
.grocery { width: 125px; background: #aedbd5; }
.motor { width: 122px; background: #aedbd5; }

.c-elec { width: 159px; }
.elec { height: 116px; background: #b0dcd6; }
.general { height: 89px; background: #b0dcd6; }
.gas { height: 88px; background: #b0dcd6; }

.c-small { width: 225px; }
.s1 { height: 120px; }
.s2 { height: 94px; }
.s3 { height: 72px; }
.s1a { width: 84px; }
.s1b { width: 75px; }
.s1c { width: 64px; }
.s2a { width: 76px; }
.s2b { width: 75px; }
.s2c { width: 72px; }
.s3a { width: 104px; }
.s3a1 { height: 59px; }
.s3a2 { height: 20px; }
.s3b { width: 40px; }
.s3c { width: 42px; }
.s3d { width: 36px; }
.c-small .tile { background: #bbe3d8; }

.canvas-rest {
    flex: 1;
    background: #f5f5f5;
}

.main-scroll {
    flex: 0 0 20px;
    padding: 21px 6px 0 7px;
    background: #fafafa;
    border-left: 1px solid #eee;
}

.main-thumb {
    height: 715px;
    background: #8a8a8a;
}

/* sheet tabs */
.tabs {
    flex: 0 0 37px;
    display: flex;
    background: #e6e6e6;
    border-top: 1px solid #ccc;
    border-bottom: 1px solid #ccc;
}

.tab {
    display: flex;
    align-items: center;
    justify-content: center;
    gap: 4px;
    font-size: 14.5px;
    color: #666;
    border-right: 1px solid #ccc;
}

.tab.active {
    background: #fafafa;
    font-weight: 700;
}

.t-source {
    justify-content: flex-start;
    padding-left: 10px;
    gap: 6px;
}

.t32 { width: 32px; }
.t69 { width: 69px; }
.t70 { width: 70px; }
.t71 { width: 71px; }
.t74 { width: 74px; }
.t76 { width: 76px; }
.t79 { width: 79px; }
.t83 { width: 83px; }
.t84 { width: 84px; }
.t122 { width: 122px; }
.t124 { width: 124px; }
.t125 { width: 125px; }
.t162 { width: 162px; }

.add-ico {
    position: relative;
    display: flex;
}

.add-ico i {
    position: absolute;
    right: -5px;
    bottom: -4px;
    width: 9px;
    height: 9px;
    background:
        linear-gradient(#555, #555) center / 9px 2px no-repeat,
        linear-gradient(#555, #555) center / 2px 9px no-repeat;
}

/* status bar */
.statusbar {
    flex: 0 0 26px;
    display: flex;
    background: #ebebeb;
}

.st {
    display: flex;
    align-items: center;
    border-right: 1px solid #d0d0d0;
}

.st-main { width: 1501px; }
.st-a { width: 157px; }
.st-b { width: 32px; }
.st-c { width: 57px; }

.st-nav {
    width: 71px;
    justify-content: space-around;
    padding: 0 7px;
}

.st-views {
    flex: 1;
    justify-content: space-between;
    padding: 0 5px 0 8px;
    border-right: 0;
}

/* taskbar */
.taskbar {
    flex: 0 0 60px;
    display: flex;
    align-items: center;
    background: #1c1c1c;
    color: #eee;
}

.weather {
    flex: 0 0 395px;
    display: flex;
    align-items: center;
    gap: 8px;
    padding-left: 25px;
}

.weather-text {
    display: flex;
    flex-direction: column;
    font-size: 14.9px;
    line-height: 19px;
    color: #ddd;
}

.start {
    flex: 0 0 29px;
    margin-right: 17px;
}

.search {
    flex: 0 0 275px;
    display: flex;
    align-items: center;
    gap: 12px;
    height: 40px;
    padding-left: 14px;
    font-size: 16px;
    color: #ccc;
    background: #3a3a3a;
    border-radius: 20px;
}

.task-items {
    display: flex;
    margin-left: 4px;
}

.task-item {
    position: relative;
    flex: 0 0 54.85px;
    display: flex;
    align-items: center;
    justify-content: center;
    height: 60px;
}

.task-item.running::after,
.task-item.current::after {
    content: "";
    position: absolute;
    bottom: 4px;
    left: 50%;
    width: 10px;
    height: 4px;
    margin-left: -5px;
    border-radius: 2px;
    background: #8c8c8c;
}

.task-item.current {
    background: #2b2b2b;
    border-radius: 6px;
}

.task-item.current::after {
    width: 20px;
    margin-left: -10px;
    background: #4cc2ff;
}

.badge {
    position: absolute;
    top: 6px;
    left: 31px;
    width: 20px;
    height: 20px;
    font-size: 13px;
    line-height: 20px;
    text-align: center;
    color: #111;
    background: #4cc2ff;
    border-radius: 50%;
}

.badge.wide {
    left: 27px;
    width: 23px;
    height: 23px;
    line-height: 23px;
}

.ps {
    width: 28px;
    height: 30px;
    font-size: 16px;
    line-height: 26px;
    text-align: center;
    color: #31a8ff;
    background: #001e36;
    border: 2px solid #31a8ff;
}

.tableau-tile {
    display: flex;
    align-items: center;
    justify-content: center;
    width: 28px;
    height: 28px;
    background: #f4f4f4;
}

.tray {
    display: flex;
    align-items: center;
    width: 417px;
    margin-left: auto;
    padding-right: 25px;
}

.tray-item {
    display: flex;
    align-items: center;
    justify-content: center;
}

.w25 { width: 25px; }
.w34 { width: 34px; }
.w36 { width: 36px; }
.w39 { width: 39px; }
.w40 { width: 40px; }
.w42 { width: 42px; }
.w56 { width: 56px; }

.lang {
    display: block;
    font-size: 14px;
    line-height: 20px;
    text-align: center;
}

.clock {
    flex: 1;
    font-size: 15px;
    line-height: 20px;
    text-align: right;
}

.notif {
    width: 20px;
    height: 20px;
    margin-left: 9px;
    font-size: 12px;
    line-height: 20px;
    text-align: center;
    color: #111;
    background: #4cc2ff;
    border-radius: 50%;
}
```
